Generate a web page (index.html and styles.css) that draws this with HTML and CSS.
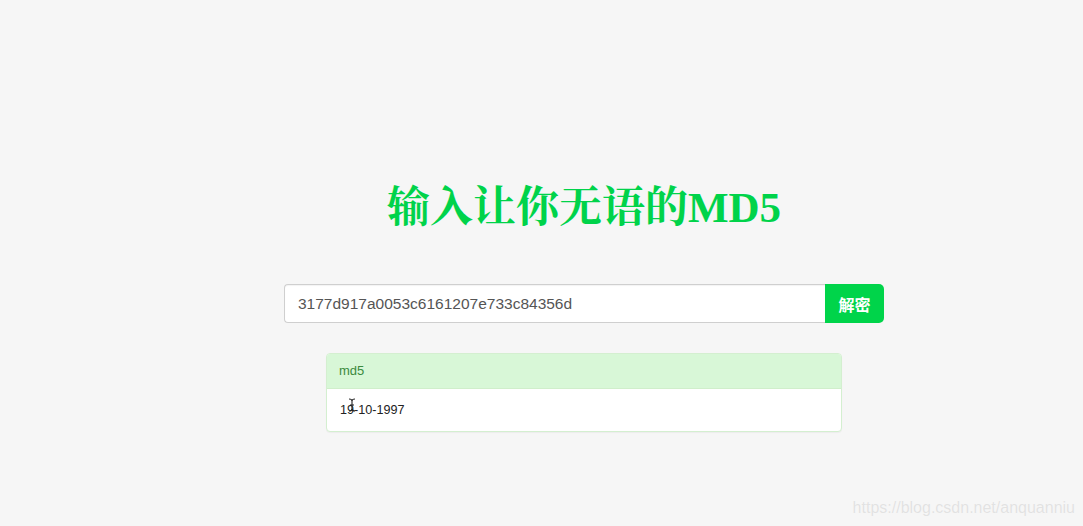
FILE: index.html
```html
<!DOCTYPE html>
<html lang="zh-CN">
<head>
<meta charset="utf-8">
<title>输入让你无语的MD5</title>
<link rel="stylesheet" href="styles.css">
</head>
<body>
<main class="page">
  <h1 class="title">输入让你无语的MD5</h1>
  <form class="search">
    <input class="search-input" type="text" value="3177d917a0053c6161207e733c84356d">
    <button class="search-btn" type="button">解密</button>
  </form>
  <section class="panel">
    <div class="panel-heading">md5</div>
    <div class="panel-body">
      <span class="result">19-10-1997</span>
      <svg class="ibeam" width="8" height="14" viewBox="0 0 8 14" aria-hidden="true">
        <path d="M1 1 Q4 1 4 3 L4 11 Q4 13 1 13 M7 1 Q4 1 4 3 M4 11 Q4 13 7 13 M2 7 L6 7" fill="none" stroke="#222" stroke-width="1.1"/>
      </svg>
    </div>
  </section>
</main>
<div class="watermark">https://blog.csdn.net/anquanniu</div>
</body>
</html>
```
FILE: styles.css
```css
html, body {
  margin: 0;
  padding: 0;
  height: 100%;
}
body {
  background: #f6f6f6;
  font-family: "Liberation Sans", Arial, "Noto Sans CJK SC", sans-serif;
  overflow: hidden;
}
.page {
  display: flex;
  flex-direction: column;
  align-items: center;
  padding-left: 85px;
  padding-top: 180px;
}
.title {
  margin: 0;
  height: 56px;
  line-height: 56px;
  font-family: "Liberation Serif", "Times New Roman", "Noto Serif CJK SC", "Noto Sans CJK SC", serif;
  font-weight: bold;
  font-size: 43px;
  color: #00d34a;
  letter-spacing: 0;
}
.search {
  display: flex;
  width: 600px;
  margin: 48px 0 0 0;
}
.search-input {
  flex: 1;
  box-sizing: border-box;
  height: 39px;
  margin: 0;
  padding: 0 13px;
  border: 1px solid #cfcfcf;
  border-right: none;
  border-radius: 4px 0 0 4px;
  background: #fff;
  font-family: "Liberation Sans", Arial, sans-serif;
  font-size: 15.5px;
  color: #555;
  outline: none;
  box-shadow: inset 0 1px 1px rgba(0,0,0,0.05);
}
.search-btn {
  width: 59px;
  height: 39px;
  margin: 0;
  padding: 0;
  border: none;
  border-radius: 0 5px 5px 0;
  background: #00d44a;
  color: #fff;
  font-family: "Noto Sans CJK SC", sans-serif;
  font-weight: bold;
  font-size: 16px;
}
.panel {
  width: 516px;
  margin-top: 30px;
  box-sizing: border-box;
  border: 1px solid #d4efd0;
  border-radius: 4px;
  background: #fff;
  overflow: hidden;
  box-shadow: 0 1px 1px rgba(0,0,0,0.04);
}
.panel-heading {
  height: 34px;
  line-height: 34px;
  padding: 0 12px;
  background: #d8f7d7;
  border-bottom: 1px solid #d0eecb;
  color: #3b8a3d;
  font-size: 13px;
}
.panel-body {
  position: relative;
  height: 42px;
  line-height: 42px;
  padding: 0 13px;
  font-size: 12.6px;
  color: #222;
}
.ibeam {
  position: absolute;
  left: 21px;
  top: 9px;
}
.watermark {
  position: absolute;
  right: 8px;
  bottom: 9px;
  font-family: "Liberation Sans", Arial, sans-serif;
  font-size: 16px;
  color: #e2e2e2;
  text-shadow: 0 0 1px #fff;
}
```
